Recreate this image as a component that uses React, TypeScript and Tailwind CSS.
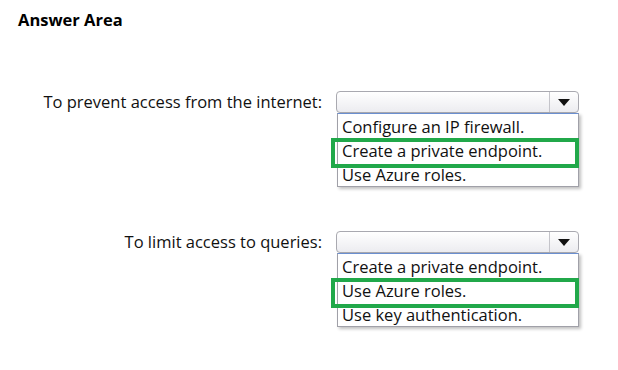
import React from "react";

const font = { fontFamily: '"Open Sans", "Noto Sans", sans-serif' };

function Select({ items, selected }: { items: string[]; selected: number }) {
  return (
    <div className="w-[243px]">
      <div className="flex h-[22px] w-[243px] rounded-[4px] border border-[#a9a9b0] bg-gradient-to-b from-[#ffffff] to-[#ececf0]">
        <div className="flex-1" />
        <div className="flex w-[29px] items-center justify-center border-l border-[#c4c4ca]">
          <svg width="12" height="7" viewBox="0 0 12 7">
            <path d="M0 0 L12 0 L6 7 Z" fill="#111" />
          </svg>
        </div>
      </div>
      <div className="relative ml-[1px] w-[242px] border border-[#a0a0a8] border-t-[#6a8fd0] bg-white shadow-[2px_2px_3px_rgba(0,0,0,0.25)]">
        {items.map((t, i) => (
          <div key={i} className="h-[24px] pl-[4px] pt-[1px] text-[16.5px] leading-[24px] text-[#111]">
            {t}
          </div>
        ))}
        <div
          className="absolute left-[-7px] right-[-1px] h-[30px] border-[4px] border-[#21a84a]"
          style={{ top: selected * 24 }}
        />
      </div>
    </div>
  );
}

export default function App() {
  return (
    <div className="h-[370px] w-[618px] bg-white" style={font}>
      <div className="pl-[18px] pt-[10px] text-[16.5px] font-bold leading-[20px] text-black">Answer Area</div>
      <div className="mt-[61px] flex items-start">
        <div className="w-[322px] text-right text-[16.5px] leading-[22px] text-[#111]">
          To prevent access from the internet:
        </div>
        <div className="ml-[14px]">
          <Select
            items={["Configure an IP firewall.", "Create a private endpoint.", "Use Azure roles."]}
            selected={1}
          />
        </div>
      </div>
      <div className="mt-[44px] flex items-start">
        <div className="w-[322px] text-right text-[16.5px] leading-[22px] text-[#111]">
          To limit access to queries:
        </div>
        <div className="ml-[14px]">
          <Select
            items={["Create a private endpoint.", "Use Azure roles.", "Use key authentication."]}
            selected={1}
          />
        </div>
      </div>
    </div>
  );
}
